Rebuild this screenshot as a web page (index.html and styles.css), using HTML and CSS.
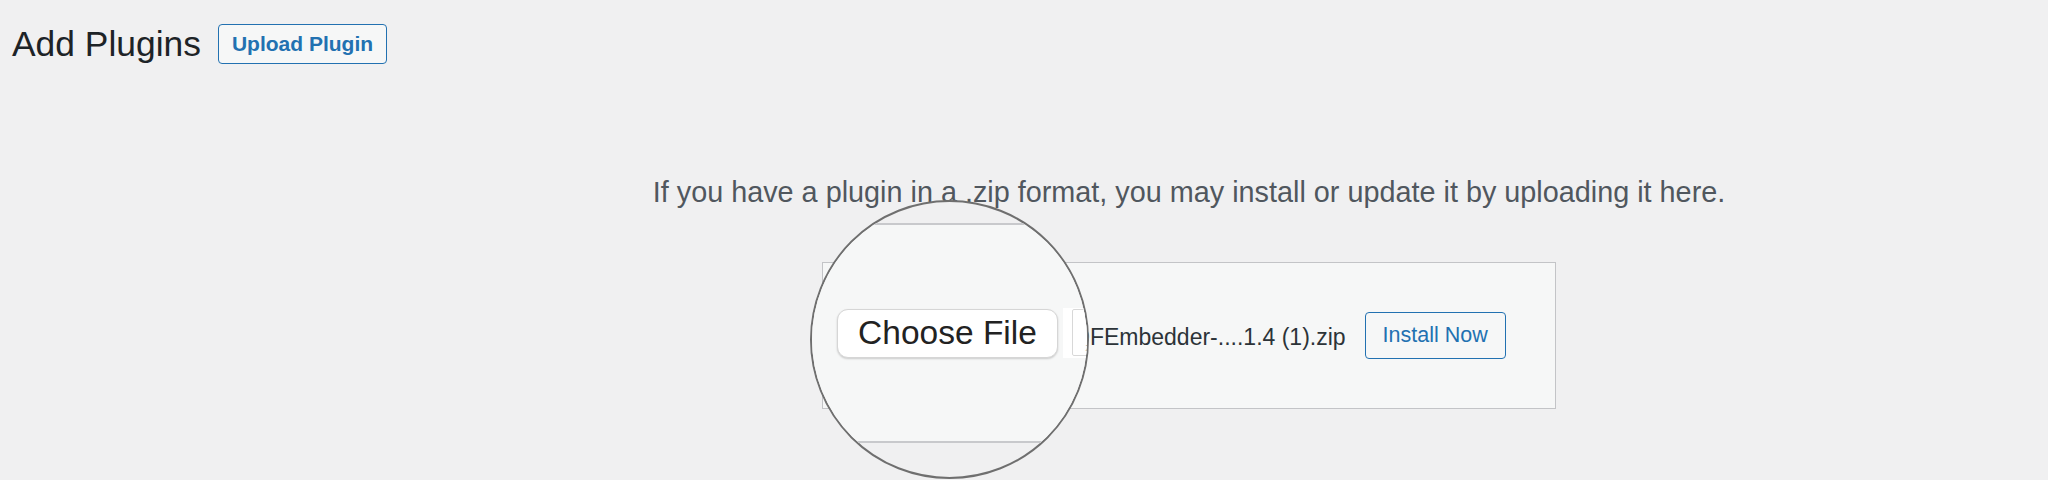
FILE: index.html
```html
<!doctype html>
<html lang="en">
<head>
<meta charset="utf-8">
<title>Add Plugins</title>
<meta name="viewport" content="width=device-width,initial-scale=1">
<link rel="stylesheet" href="styles.css">
</head>
<body>
<div class="wrap">
  <div class="page-head">
    <h1>Add Plugins</h1>
    <a class="page-title-action" href="#">Upload Plugin</a>
  </div>

  <div class="upload-plugin">
    <p class="install-help">If you have a plugin in a .zip format, you may install or update it by uploading it here.</p>

    <form class="wp-upload-form">
      <div class="file-input">
        <span class="choose">Choose File</span>
        <span class="file-icon"></span>
        <span class="file-name">PDFEmbedder-....1.4 (1).zip</span>
      </div>
      <button type="button" class="install-now">Install Now</button>

      <!-- magnifier over the file input -->
      <div class="lens">
        <div class="lens-box">
          <span class="lens-choose">Choose File</span>
          <span class="lens-icon"><span class="lens-doc"><span class="lens-z">z</span></span></span>
        </div>
      </div>
    </form>
  </div>
</div>
</body>
</html>
```

FILE: styles.css
```css
body{margin:0;background:#f0f0f1;font-family:"Liberation Sans",Arial,sans-serif;color:#1d2327;}
.wrap{padding-bottom:71px;}
.page-head{display:flex;align-items:center;gap:17px;padding:24px 0 0 12px;}
h1{margin:0;font-size:35.4px;line-height:40px;font-weight:400;color:#1d2327;}
.page-title-action{box-sizing:border-box;height:40px;display:flex;align-items:center;padding:0 13px;border:1px solid #2271b1;border-radius:4px;background:#f6f7f7;color:#2271b1;font-size:21px;font-weight:700;text-decoration:none;}

.upload-plugin{margin-left:330px;}
.install-help{margin:111px 0 0;text-align:center;font-size:28.8px;line-height:34px;color:#50575e;}

.wp-upload-form{position:relative;box-sizing:border-box;width:734px;height:147px;margin:53px auto 0;padding:0 49px;display:flex;align-items:center;background:#f6f7f7;border:1px solid #c3c4c7;}
.file-input{display:flex;align-items:center;}
.choose{box-sizing:border-box;width:150px;height:32px;margin-right:10px;background:#fff;border:1px solid #d4d4d4;border-radius:7px;}
.file-icon{width:26px;height:32px;background:#fff;}
.file-name{margin-top:3px;font-size:23px;line-height:27px;color:#2c3338;white-space:nowrap;}
.install-now{box-sizing:border-box;height:47px;margin-left:19px;padding:0 17px;border:1px solid #2271b1;border-radius:4px;background:#f6f7f7;color:#2271b1;font-family:inherit;font-size:21.5px;}

.lens{position:absolute;left:-13px;top:-63px;z-index:2;box-sizing:border-box;width:279px;height:279px;border:2px solid #6f6f6f;border-radius:50%;overflow:hidden;background:#f0f0f1;}
.lens-box{position:absolute;left:0;right:0;top:21px;box-sizing:border-box;height:220px;padding-left:25px;display:flex;align-items:center;gap:5px;background:#f6f7f7;border-top:2px solid #c8c9cc;border-bottom:2px solid #c8c9cc;}
.lens-choose{box-sizing:border-box;flex:none;width:221px;height:49px;display:flex;align-items:center;justify-content:center;background:#fff;border:1px solid #d6d6d6;border-radius:11px;box-shadow:0 1px 2px rgba(0,0,0,.18);font-size:33.5px;color:#222;}
.lens-icon{flex:none;box-sizing:border-box;width:40px;height:50px;padding:1px 0 0 9px;background:#fff;}
.lens-doc{box-sizing:border-box;width:22px;height:47px;display:flex;align-items:flex-end;justify-content:flex-end;padding:0 2px 2px 0;border:1.5px solid #d8d8d8;border-radius:2px;}
.lens-z{font-size:11px;line-height:11px;color:#777;}
```
